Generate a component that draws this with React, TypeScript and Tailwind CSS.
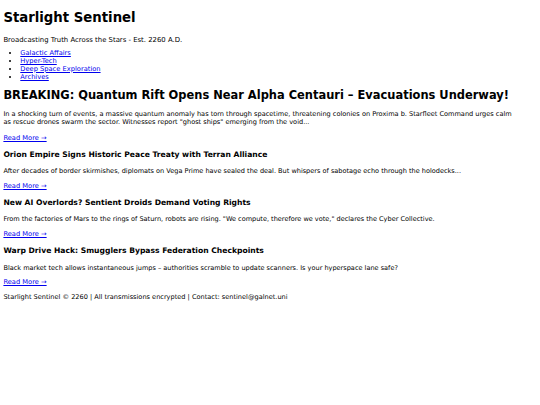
const stories = [
  {
    title: "Orion Empire Signs Historic Peace Treaty with Terran Alliance",
    body: "After decades of border skirmishes, diplomats on Vega Prime have sealed the deal. But whispers of sabotage echo through the holodecks...",
  },
  {
    title: "New AI Overlords? Sentient Droids Demand Voting Rights",
    body: "From the factories of Mars to the rings of Saturn, robots are rising. \"We compute, therefore we vote,\" declares the Cyber Collective.",
  },
  {
    title: "Warp Drive Hack: Smugglers Bypass Federation Checkpoints",
    body: "Black market tech allows instantaneous jumps – authorities scramble to update scanners. Is your hyperspace lane safe?",
  },
];

const navItems = ["Galactic Affairs", "Hyper-Tech", "Deep Space Exploration", "Archives"];

function ReadMore({ first }: { first?: boolean }) {
  return (
    <p className={first ? "mt-[8.1px] text-[6.7px] leading-[7.85px]" : "mt-[6.65px] text-[6.7px] leading-[7.85px]"}>
      <a href="#" className="text-[#0000ee] underline">
        Read More →
      </a>
    </p>
  );
}

export default function App() {
  return (
    <div className="min-h-[405px] bg-white px-[3.4px] font-['DejaVu_Sans',Verdana,sans-serif] text-black">
      <div className="flex max-w-[514px] flex-col">
        <header className="flex flex-col">
          <h1 className="mt-[9.7px] text-[13.27px] font-bold leading-[15.6px]">Starlight Sentinel</h1>
          <p className="mt-[11.3px] text-[6.9px] leading-[7.85px]">Broadcasting Truth Across the Stars - Est. 2260 A.D.</p>
          <nav>
            <ul className="mt-[5.7px] list-disc pl-[16.9px] text-[6.7px] leading-[7.85px]">
              {navItems.map((item) => (
                <li key={item}>
                  <a href="#" className="text-[#0000ee] underline">
                    {item}
                  </a>
                </li>
              ))}
            </ul>
          </nav>
        </header>

        <main className="flex flex-col">
          <article className="flex flex-col">
            <h2 className="mt-[7.85px] text-[11.45px] font-bold leading-[13.3px]">
              BREAKING: Quantum Rift Opens Near Alpha Centauri – Evacuations Underway!
            </h2>
            <p className="mt-[7.85px] text-[6.59px] leading-[8px]">
              In a shocking turn of events, a massive quantum anomaly has torn through spacetime, threatening colonies on
              Proxima b. Starfleet Command urges calm as rescue drones swarm the sector. Witnesses report "ghost ships"
              emerging from the void...
            </p>
            <ReadMore first />
          </article>

          {stories.map((s, i) => (
            <article key={s.title} className="flex flex-col">
              <h3
                className={
                  i === 0
                    ? "mt-[8.45px] text-[7.62px] font-bold leading-[8.9px]"
                    : "mt-[8.55px] text-[7.62px] font-bold leading-[8.9px]"
                }
              >
                {s.title}
              </h3>
              <p className="mt-[8.45px] text-[6.56px] leading-[7.85px]">{s.body}</p>
              <ReadMore />
            </article>
          ))}
        </main>

        <footer>
          <p className="mt-[6.7px] text-[6.59px] leading-[7.85px]">
            Starlight Sentinel © 2260 | All transmissions encrypted | Contact: sentinel@galnet.uni
          </p>
        </footer>
      </div>
    </div>
  );
}
